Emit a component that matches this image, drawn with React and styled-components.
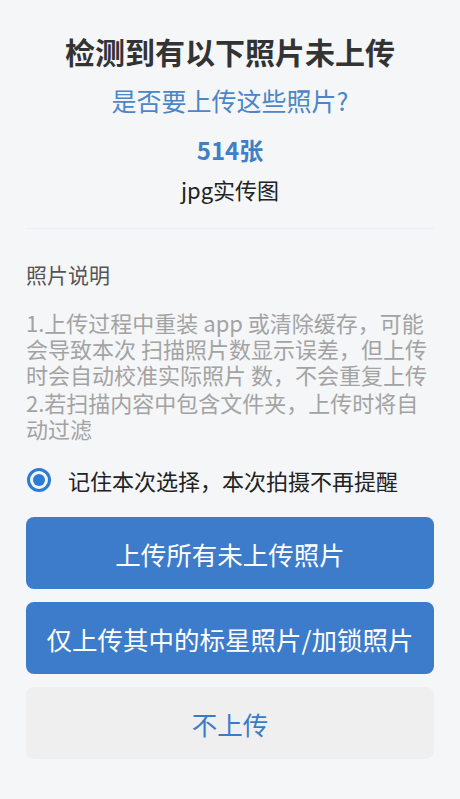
import React from "react";
import styled, { createGlobalStyle } from "styled-components";

const Global = createGlobalStyle`
  html, body { margin: 0; padding: 0; background: #f5f6f8; }
  body { font-family: "Noto Sans CJK SC", "Noto Sans", sans-serif; }
  * { box-sizing: border-box; }
`;

const Page = styled.div`
  min-height: 799px;
  background: #f5f6f8;
  padding: 30px 26px 0 26px;
  display: flex;
  flex-direction: column;
`;

const Header = styled.div`
  display: flex;
  flex-direction: column;
  align-items: center;
  text-align: center;
`;

const Title = styled.h1`
  margin: 0;
  font-size: 30px;
  line-height: 42px;
  font-weight: 700;
  color: #333333;
`;

const Subtitle = styled.div`
  margin-top: 11px;
  font-size: 25px;
  line-height: 34px;
  color: #4a86c8;
`;

const Count = styled.div`
  margin-top: 16px;
  font-size: 24px;
  line-height: 34px;
  font-weight: 700;
  color: #3f7fc4;
`;

const Kind = styled.div`
  margin-top: 7px;
  font-size: 22px;
  line-height: 30px;
  color: #222222;
`;

const Divider = styled.div`
  margin-top: 24px;
  height: 1px;
  background: #eceef1;
`;

const SectionTitle = styled.div`
  margin-top: 30px;
  font-size: 21px;
  line-height: 30px;
  color: #555555;
`;

const Notes = styled.div`
  margin-top: 20px;
  display: flex;
  flex-direction: column;
  gap: 2px;
`;

const Note = styled.p`
  margin: 0;
  font-size: 22px;
  line-height: 26px;
  color: #a3a3a3;
`;

const RadioRow = styled.label`
  margin-top: 24px;
  height: 30px;
  display: flex;
  align-items: center;
  gap: 17px;
  font-size: 22px;
  color: #222222;
`;

const Radio = styled.span`
  width: 24px;
  height: 24px;
  border-radius: 50%;
  border: 3px solid #2c7bd4;
  display: flex;
  align-items: center;
  justify-content: center;
  margin-left: 1px;
  &::after {
    content: "";
    width: 12px;
    height: 12px;
    border-radius: 50%;
    background: #2c7bd4;
  }
`;

const Actions = styled.div`
  margin-top: 22px;
  display: flex;
  flex-direction: column;
  gap: 13px;
`;

const Button = styled.button`
  height: 72px;
  border: none;
  border-radius: 8px;
  font-family: inherit;
  font-size: 25.5px;
  background: ${(p) => (p.$secondary ? "#efefef" : "#3d7bcb")};
  color: ${(p) => (p.$secondary ? "#3a7bc8" : "#ffffff")};
  display: flex;
  align-items: center;
  justify-content: center;
  padding: 0;
`;

export default function App() {
  return (
    <>
      <Global />
      <Page>
        <Header>
          <Title>检测到有以下照片未上传</Title>
          <Subtitle>是否要上传这些照片?</Subtitle>
          <Count>514张</Count>
          <Kind>jpg实传图</Kind>
        </Header>
        <Divider />
        <SectionTitle>照片说明</SectionTitle>
        <Notes>
          <Note>1.上传过程中重装 app 或清除缓存，可能会导致本次 扫描照片数显示误差，但上传时会自动校准实际照片 数，不会重复上传</Note>
          <Note>2.若扫描内容中包含文件夹，上传时将自动过滤</Note>
        </Notes>
        <RadioRow>
          <Radio />
          <span>记住本次选择，本次拍摄不再提醒</span>
        </RadioRow>
        <Actions>
          <Button>上传所有未上传照片</Button>
          <Button>仅上传其中的标星照片/加锁照片</Button>
          <Button $secondary>不上传</Button>
        </Actions>
      </Page>
    </>
  );
}
